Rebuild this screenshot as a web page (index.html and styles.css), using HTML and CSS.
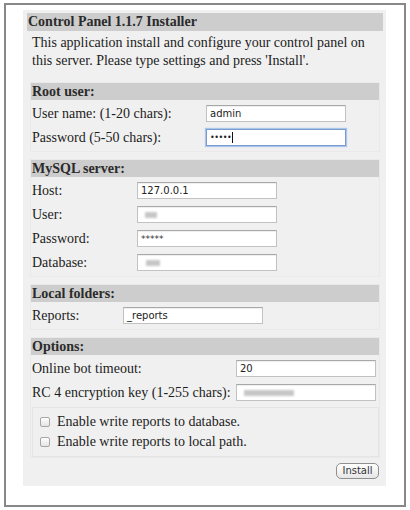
FILE: index.html
```html
<!DOCTYPE html>
<html>
<head>
<meta charset="utf-8">
<title>Control Panel 1.1.7 Installer</title>
<link rel="stylesheet" href="styles.css">
</head>
<body>
<div class="frame">
  <div class="panel">
    <div class="title">Control Panel 1.1.7 Installer</div>
    <p class="intro">This application install and configure your control panel on this server. Please type settings and press 'Install'.</p>

    <section class="group">
      <div class="bar">Root user:</div>
      <div class="rows rows-root">
        <label>User name: (1-20 chars):</label><span class="field">admin</span>
        <label>Password (5-50 chars):</label><span class="field focus"><span class="dots">•••••</span><i class="caret"></i></span>
      </div>
    </section>

    <section class="group">
      <div class="bar">MySQL server:</div>
      <div class="rows rows-mysql">
        <label>Host:</label><span class="field">127.0.0.1</span>
        <label>User:</label><span class="field"><i class="blur b-user"></i></span>
        <label>Password:</label><span class="field"><span class="stars">*****</span></span>
        <label>Database:</label><span class="field"><i class="blur b-db"></i></span>
      </div>
    </section>

    <section class="group">
      <div class="bar">Local folders:</div>
      <div class="rows rows-local">
        <label>Reports:</label><span class="field">_reports</span>
      </div>
    </section>

    <section class="group last">
      <div class="bar">Options:</div>
      <div class="rows rows-opts">
        <label>Online bot timeout:</label><span class="field">20</span>
        <label>RC 4 encryption key (1-255 chars):</label><span class="field"><i class="blur b-key"></i></span>
      </div>
      <div class="checks">
        <div class="check"><span class="box"></span>Enable write reports to database.</div>
        <div class="check"><span class="box"></span>Enable write reports to local path.</div>
      </div>
    </section>

    <div class="actions"><button class="btn">Install</button></div>
  </div>
</div>
</body>
</html>
```

FILE: styles.css
```css
* { box-sizing: border-box; }

body {
  margin: 0;
  background: #fff;
  font-family: "Liberation Serif", "Times New Roman", serif;
  font-size: 14px;
  color: #1c1c1c;
}

.frame {
  margin: 3px 0 0 4px;
  width: 402px;
  height: 504px;
  border: 2px solid #888888;
  padding: 5px 0 0 17px;
}

.panel {
  width: 363px;
  background: #f0f0f0;
  padding: 3px 3px 7px 4px;
}

.title {
  height: 18px;
  line-height: 18px;
  background: #cdcdcd;
  font-weight: bold;
  padding-left: 1px;
  color: #2b2b2b;
}

.intro {
  margin: 0 0 12px;
  padding: 3px 0 0 5px;
  line-height: 18px;
}

.group {
  margin: 0 3px 7px 3px;
  border: 1px solid #e9e9e9;
  padding-bottom: 5px;
}

.group.last {
  margin-bottom: 0;
  padding-bottom: 0;
}

.bar {
  height: 17px;
  line-height: 17px;
  background: #cdcdcd;
  font-weight: bold;
  padding-left: 1px;
  margin-bottom: 5px;
  color: #2b2b2b;
}

.rows {
  display: grid;
  row-gap: 7px;
  align-items: center;
  padding-left: 1px;
}

.rows label { line-height: 17px; white-space: nowrap; }

.rows-root { grid-template-columns: 174px 140px; }
.rows-mysql { grid-template-columns: 105px 140px; }
.rows-local { grid-template-columns: 91px 140px; }
.rows-opts { grid-template-columns: 204px 140px; }

.field {
  display: flex;
  align-items: center;
  height: 17px;
  width: 140px;
  background: #fff;
  border: 1px solid #c2c2c2;
  border-top-color: #a8a8a8;
  box-shadow: inset 0 1px 1px rgba(0,0,0,0.07);
  font-family: "DejaVu Sans", "Lucida Grande", sans-serif;
  font-size: 10px;
  color: #222;
  padding-left: 3px;
  white-space: nowrap;
}

.field.focus {
  border-color: #7a9ccc;
  box-shadow: 0 0 1px 1px #a9c6ec;
}

.dots { font-size: 8px; letter-spacing: -0.5px; color: #222; }
.stars { font-size: 9px; color: #333; }

.caret {
  display: block;
  width: 1px;
  height: 11px;
  background: #111;
  margin-left: 1px;
}

.blur {
  display: block;
  height: 6px;
  background: #b8b8b8;
  filter: blur(1.3px);
  opacity: 0.8;
}
.b-user { width: 12px; margin-left: 4px; }
.b-db { width: 14px; margin-left: 5px; }
.b-key { width: 50px; margin-left: 4px; }

.checks {
  margin: 6px 0 0 1px;
  height: 50px;
  border: 1px solid #e5e5e5;
  padding: 4px 0 0 7px;
}

.check {
  display: flex;
  align-items: center;
  height: 20px;
  white-space: nowrap;
}

.box {
  width: 10px;
  height: 10px;
  border: 1px solid #a6a6a6;
  border-radius: 2px;
  background: linear-gradient(#ffffff, #e4e4e4);
  margin-right: 7px;
  flex: none;
}

.actions {
  display: flex;
  justify-content: flex-end;
  margin-top: 5px;
  padding-right: 4px;
}

.btn {
  width: 43px;
  height: 16px;
  padding: 0;
  border: 1px solid #8f8f8f;
  border-radius: 5px;
  background: linear-gradient(#ffffff, #e6e6e6);
  font-family: "DejaVu Sans", "Lucida Grande", sans-serif;
  font-size: 10px;
  color: #333;
  line-height: 14px;
}
```
